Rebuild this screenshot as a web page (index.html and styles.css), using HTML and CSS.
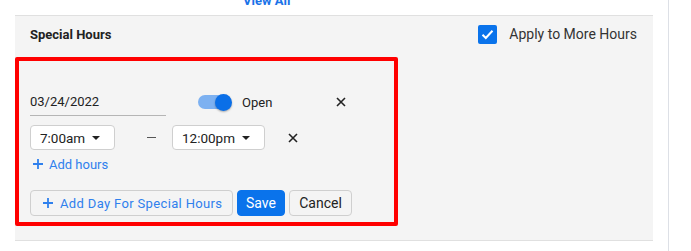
FILE: index.html
```html
<!DOCTYPE html>
<html>
<head>
    <title>Special Hours</title>
    <link rel="stylesheet" href="styles.css">
</head>
<body>
    <div class="pagina">
        <div class="ver-todos"><a href="#">View All</a></div>

        <div class="painel">
            <div class="cabecalho">
                <span class="titulo">Special Hours</span>
                <label class="aplicar">
                    <span class="caixa">
                        <svg width="13" height="11" viewBox="0 0 13 11"><path d="M1.5 5.8 L4.8 9 L11.5 1.8" fill="none" stroke="#fff" stroke-width="2"/></svg>
                    </span>
                    Apply to More Hours
                </label>
            </div>

            <!-- Destaque vermelho em volta do formulário -->
            <div class="destaque">
                <div class="linha-data">
                    <div class="campo-data">03/24/2022</div>
                    <div class="chave"><span class="bolinha"></span></div>
                    <span class="aberto">Open</span>
                    <span class="fechar fechar-dia">
                        <svg width="10" height="10" viewBox="0 0 10 10"><path d="M1 1 L9 9 M9 1 L1 9" stroke="#222" stroke-width="1.6"/></svg>
                    </span>
                </div>

                <div class="linha-horas">
                    <div class="seletor s1">7:00am <span class="seta"></span></div>
                    <span class="traco"></span>
                    <div class="seletor s2">12:00pm <span class="seta"></span></div>
                    <span class="fechar fechar-hora">
                        <svg width="10" height="10" viewBox="0 0 10 10"><path d="M1 1 L9 9 M9 1 L1 9" stroke="#222" stroke-width="1.6"/></svg>
                    </span>
                </div>

                <a href="#" class="add-horas">
                    <svg class="mais" width="10" height="10" viewBox="0 0 10 10"><path d="M5 0 V10 M0 5 H10" stroke="#2f80ed" stroke-width="1.8"/></svg>
                    Add hours
                </a>

                <div class="botoes">
                    <button class="btn-dia">
                        <svg class="mais" width="10" height="10" viewBox="0 0 10 10"><path d="M5 0 V10 M0 5 H10" stroke="#2f80ed" stroke-width="1.8"/></svg>
                        Add Day For Special Hours
                    </button>
                    <button class="btn-salvar">Save</button>
                    <button class="btn-cancelar">Cancel</button>
                </div>
            </div>
        </div>
    </div>
</body>
</html>
```

FILE: styles.css
```css
body {
    margin: 0;
    background: white;
    font-family: Roboto, Arial, sans-serif;
    color: #222;
}
.pagina {
    width: 668px;
    height: 251px;
    border-right: 1px solid #dde0e6;
    overflow: hidden;
}
.ver-todos {
    height: 15px;
    line-height: 0;
    padding-left: 243px;
    overflow: hidden;
}
.ver-todos a {
    color: #1a73e8;
    font-size: 13px;
    font-weight: bold;
    text-decoration: none;
}
.painel {
    margin-left: 15px;
    width: 638px;
    height: 224px;
    background: #f4f4f4;
    border-top: 1px solid #e0e0e0;
    border-bottom: 1px solid #e0e0e0;
}
.cabecalho {
    height: 36px;
    margin-bottom: 5px;
    display: flex;
    align-items: center;
    justify-content: space-between;
    padding: 0 16px 0 15px;
}
.titulo {
    font-size: 13px;
    font-weight: bold;
    color: #222;
}
.aplicar {
    display: flex;
    align-items: center;
    gap: 12px;
    font-size: 14px;
    color: #333;
}
.caixa {
    width: 19px;
    height: 19px;
    border-radius: 2px;
    background: #0a73eb;
    display: flex;
    align-items: center;
    justify-content: center;
}
.destaque {
    width: 364px;
    height: 161px;
    border: 4px solid #ff0000;
    border-radius: 2px;
    padding: 0 0 0 11px;
    box-sizing: content-box;
}
.linha-data {
    display: flex;
    align-items: center;
    margin-top: 27px;
    height: 28px;
}
.campo-data {
    width: 136px;
    height: 27px;
    border-bottom: 1px solid #b5b5b5;
    font-size: 13px;
    line-height: 27px;
    color: #222;
}
.chave {
    margin-left: 32px;
    width: 32px;
    height: 14px;
    border-radius: 7px;
    background: #7db1f1;
    display: flex;
    align-items: center;
    justify-content: flex-end;
}
.bolinha {
    width: 17px;
    height: 17px;
    border-radius: 50%;
    background: #0a6fe8;
    margin-right: -2px;
    box-shadow: 0 1px 2px rgba(0, 0, 0, 0.3);
}
.aberto {
    margin-left: 12px;
    font-size: 13px;
    color: #222;
}
.fechar {
    display: flex;
    align-items: center;
}
.fechar-dia {
    margin-left: 64px;
}
.linha-horas {
    display: flex;
    align-items: center;
    margin-top: 9px;
}
.seletor {
    height: 25px;
    box-sizing: border-box;
    background: white;
    border: 1px solid #cfcfcf;
    border-radius: 4px;
    padding-left: 9px;
    display: flex;
    align-items: center;
    font-size: 13.5px;
    color: #222;
}
.s1 {
    width: 85px;
}
.s2 {
    width: 93px;
}
.seta {
    margin-left: 7px;
    width: 0;
    height: 0;
    border-left: 4px solid transparent;
    border-right: 4px solid transparent;
    border-top: 4px solid #222;
}
.traco {
    width: 9px;
    height: 1px;
    background: #555;
    margin: 0 16px 0 32px;
}
.fechar-hora {
    margin-left: 23px;
}
.add-horas {
    display: flex;
    align-items: center;
    margin-top: 4px;
    margin-left: 3px;
    height: 20px;
    color: #2f80ed;
    font-size: 13px;
    text-decoration: none;
}
.mais {
    margin-right: 6px;
}
.botoes {
    display: flex;
    gap: 4px;
    margin-top: 16px;
}
.botoes button {
    height: 26px;
    border-radius: 4px;
    font-family: Roboto, Arial, sans-serif;
    font-size: 14px;
    cursor: pointer;
    display: flex;
    align-items: center;
    justify-content: center;
    padding: 0;
}
.botoes .btn-dia {
    width: 203px;
    justify-content: flex-start;
    padding-left: 12px;
    background: #f4f4f4;
    border: 1px solid #cfcfcf;
    color: #2f80ed;
    font-size: 13px;
    letter-spacing: 0.35px;
}
.btn-dia .mais {
    margin-right: 7px;
}
.btn-salvar {
    width: 48px;
    background: #0a73eb;
    border: 1px solid #0a73eb;
    color: white;
}
.btn-cancelar {
    width: 63px;
    background: #f4f4f4;
    border: 1px solid #cfcfcf;
    color: #222;
}
```
